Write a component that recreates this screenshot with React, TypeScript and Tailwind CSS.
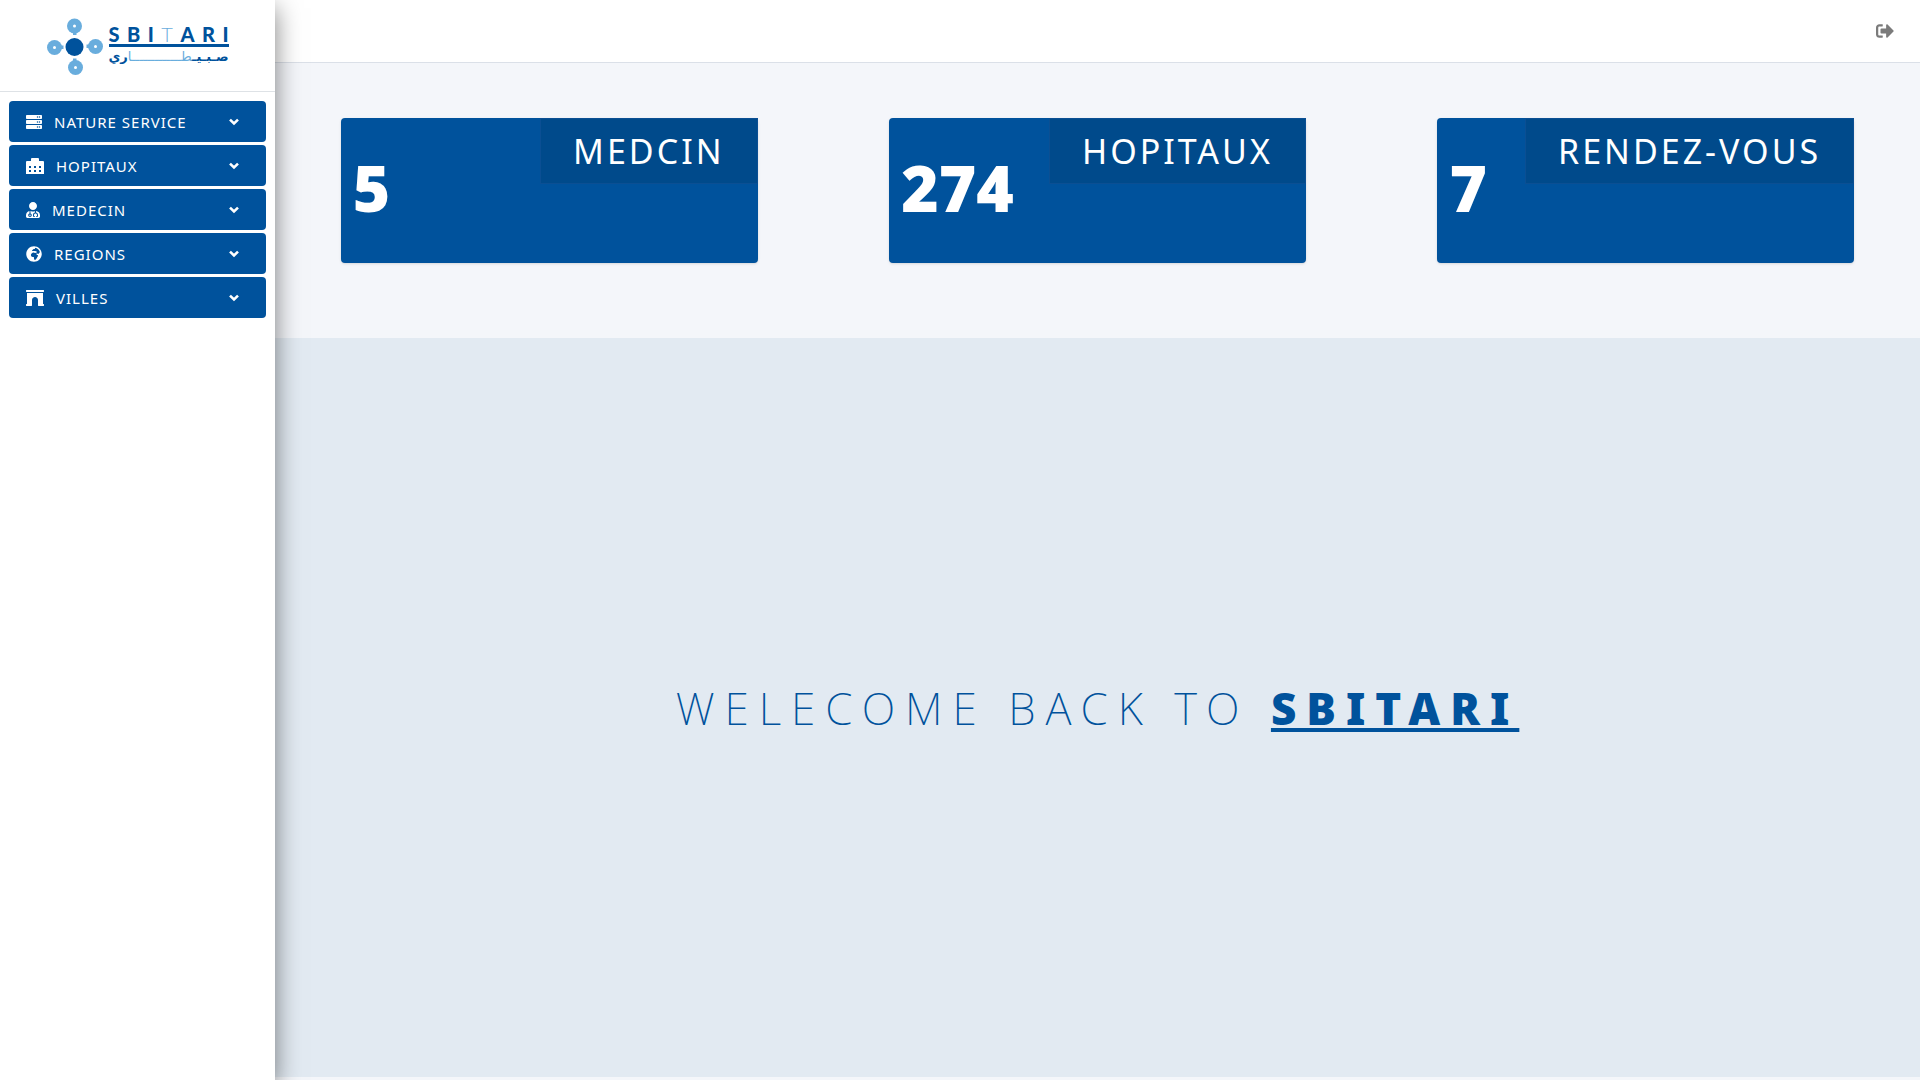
import React from "react";
import { FaServer, FaUserMd, FaGlobeAfrica, FaArchway, FaSignOutAlt } from "react-icons/fa";

const menu = [
  { label: "NATURE SERVICE", icon: <FaServer className="size-4" /> },
  { label: "HOPITAUX", icon: <HospitalIcon /> },
  { label: "MEDECIN", icon: <FaUserMd className="h-4 w-3.5" /> },
  { label: "REGIONS", icon: <FaGlobeAfrica className="size-4" /> },
  { label: "VILLES", icon: <FaArchway className="h-4 w-[18px]" /> },
];

const stats = [
  { label: "MEDCIN", value: 5 },
  { label: "HOPITAUX", value: 274 },
  { label: "RENDEZ-VOUS", value: 7 },
];

function HospitalIcon() {
  return (
    <svg viewBox="0 0 18 16" className="h-4 w-[18px]" fill="currentColor" aria-hidden="true">
      <path
        fillRule="evenodd"
        d="M6 0h6q1 0 1 1v2h4q1 0 1 1v12H0V4q0-1 1-1h4V1q0-1 1-1zM3 8v2h2V8zm5 0v2h2V8zm5 0v2h2V8zM3 12v2h2v-2zm5 0v2h2v-2zm5 0v2h2v-2z"
      />
    </svg>
  );
}

function ChevronDown() {
  return (
    <svg
      viewBox="0 0 10 8"
      className="ml-auto h-2 w-2.5"
      fill="none"
      stroke="currentColor"
      strokeWidth="2.6"
      aria-hidden="true"
    >
      <path d="M1 1.6 5 5.4 9 1.6" />
    </svg>
  );
}

function Logo() {
  return (
    <a href="#" className="flex items-start justify-center gap-[5px]" aria-label="Sbitari">
      <svg viewBox="0 0 57 58" className="h-[58px] w-[57px]" aria-hidden="true">
        <g fill="#69addd">
          <circle cx="27.5" cy="8" r="7.5" />
          <rect x="26" y="14" width="3.5" height="3" />
          <circle cx="7.5" cy="29.5" r="7.5" />
          <rect x="14" y="27.5" width="2.5" height="3.5" />
          <circle cx="48.5" cy="28.5" r="7.5" />
          <rect x="39.5" y="26.5" width="3" height="3.5" />
          <circle cx="28.5" cy="49.5" r="7.5" />
          <rect x="26" y="40.5" width="3.5" height="3" />
        </g>
        <g fill="#fff">
          <circle cx="27.5" cy="8" r="1.5" />
          <circle cx="7.5" cy="29.5" r="1.5" />
          <circle cx="48.5" cy="28.5" r="1.5" />
          <circle cx="28.5" cy="49.5" r="1.5" />
        </g>
        <circle cx="27.5" cy="29" r="9" fill="#00529c" />
      </svg>
      <div className="flex w-[120px] flex-col pt-[7px] text-[#00529c]">
        <div className="flex justify-between border-b-[3px] border-[#00529c] font-['Lato',sans-serif] text-xl leading-[19px] font-black">
          <span>S</span>
          <span>B</span>
          <span>I</span>
          <span className="font-light text-[#69addd]">T</span>
          <span>A</span>
          <span>R</span>
          <span>I</span>
        </div>
        <div
          dir="rtl"
          lang="ar"
          className="font-['DejaVu_Sans',sans-serif] text-[13px] leading-5 font-bold whitespace-nowrap"
        >
          صـبـيـ<span className="font-normal text-[#69addd]">طـــــــــــــا</span>ري
        </div>
      </div>
    </a>
  );
}

function StatCard({ label, value }: { label: string; value: number }) {
  return (
    <div className="px-[12%]">
      <section className="flex h-[145px] items-start justify-between rounded bg-[#00529c] text-white shadow">
        <p className="pt-[30px] pl-3 text-[64px] leading-20 font-black">{value}</p>
        <h2 className="border border-[#0b4f93] bg-[#004a8b] px-8 text-[34px] leading-[64px] font-normal tracking-[3px] whitespace-nowrap">
          {label}
        </h2>
      </section>
    </div>
  );
}

export default function App() {
  return (
    <div className="flex min-h-screen bg-[#f4f6fa] font-['Noto_Sans',sans-serif]">
      <aside className="z-10 w-[275px] shrink-0 bg-white shadow-[0_8px_24px_rgba(0,0,0,0.5)]">
        <div className="h-[92px] border-b border-[#dee2e6] pt-[18px]">
          <Logo />
        </div>
        <nav className="flex flex-col gap-[3px] px-[9px] pt-[9px]">
          {menu.map((item) => (
            <button
              key={item.label}
              type="button"
              className="flex h-[41px] items-center gap-3 rounded bg-[#00529c] pt-px pr-[27px] pl-[17px] text-[15px] tracking-[1px] text-white"
            >
              {item.icon}
              <span>{item.label}</span>
              <ChevronDown />
            </button>
          ))}
        </nav>
      </aside>

      <div className="flex min-w-0 flex-1 flex-col pb-[3px]">
        <header className="flex h-[63px] items-center justify-end border-b border-[#dbe0e8] bg-white pr-[26px]">
          <button type="button" aria-label="Sign out" className="text-[#7b7b7b]">
            <FaSignOutAlt className="size-[18px]" />
          </button>
        </header>
        <div className="grid grid-cols-3 pt-[55px] pb-[75px]">
          {stats.map((s) => (
            <StatCard key={s.label} label={s.label} value={s.value} />
          ))}
        </div>
        <main className="flex flex-1 items-center justify-center bg-[#e2eaf2]">
          <h1 className="text-[44px] font-extralight tracking-[10px] whitespace-nowrap text-[#00529c]">
            WELECOME BACK TO <span className="font-black underline">SBITARI</span>
          </h1>
        </main>
      </div>
    </div>
  );
}
